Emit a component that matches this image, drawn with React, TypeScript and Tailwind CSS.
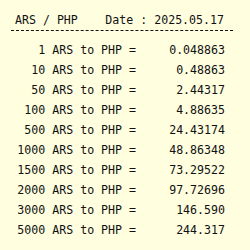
const rows: [string, string][] = [
  ["1", "0.048863"],
  ["10", "0.48863"],
  ["50", "2.44317"],
  ["100", "4.88635"],
  ["500", "24.43174"],
  ["1000", "48.86348"],
  ["1500", "73.29522"],
  ["2000", "97.72696"],
  ["3000", "146.590"],
  ["5000", "244.317"],
];

export default function App() {
  return (
    <div className="w-[250px] h-[250px] bg-[#ffffe0] text-[#111] font-['DejaVu_Sans_Mono',monospace] text-[11.6px] pt-[10px]">
      <div className="ml-[11px] w-[222px]">
        <div className="flex justify-between pl-[4px] pr-[9px] h-[21px] leading-[20px] border-b border-dashed border-[#111]">
          <span>ARS / PHP</span>
          <span>Date : 2025.05.17</span>
        </div>
        <div className="pt-[9px]">
          {rows.map(([a, b]) => (
            <div key={a} className="flex h-[20px] leading-[20px]">
              <span className="w-[125px] text-right whitespace-pre">{a} ARS to PHP =</span>
              <span className="w-[89px] text-right">{b}</span>
            </div>
          ))}
        </div>
      </div>
    </div>
  );
}
